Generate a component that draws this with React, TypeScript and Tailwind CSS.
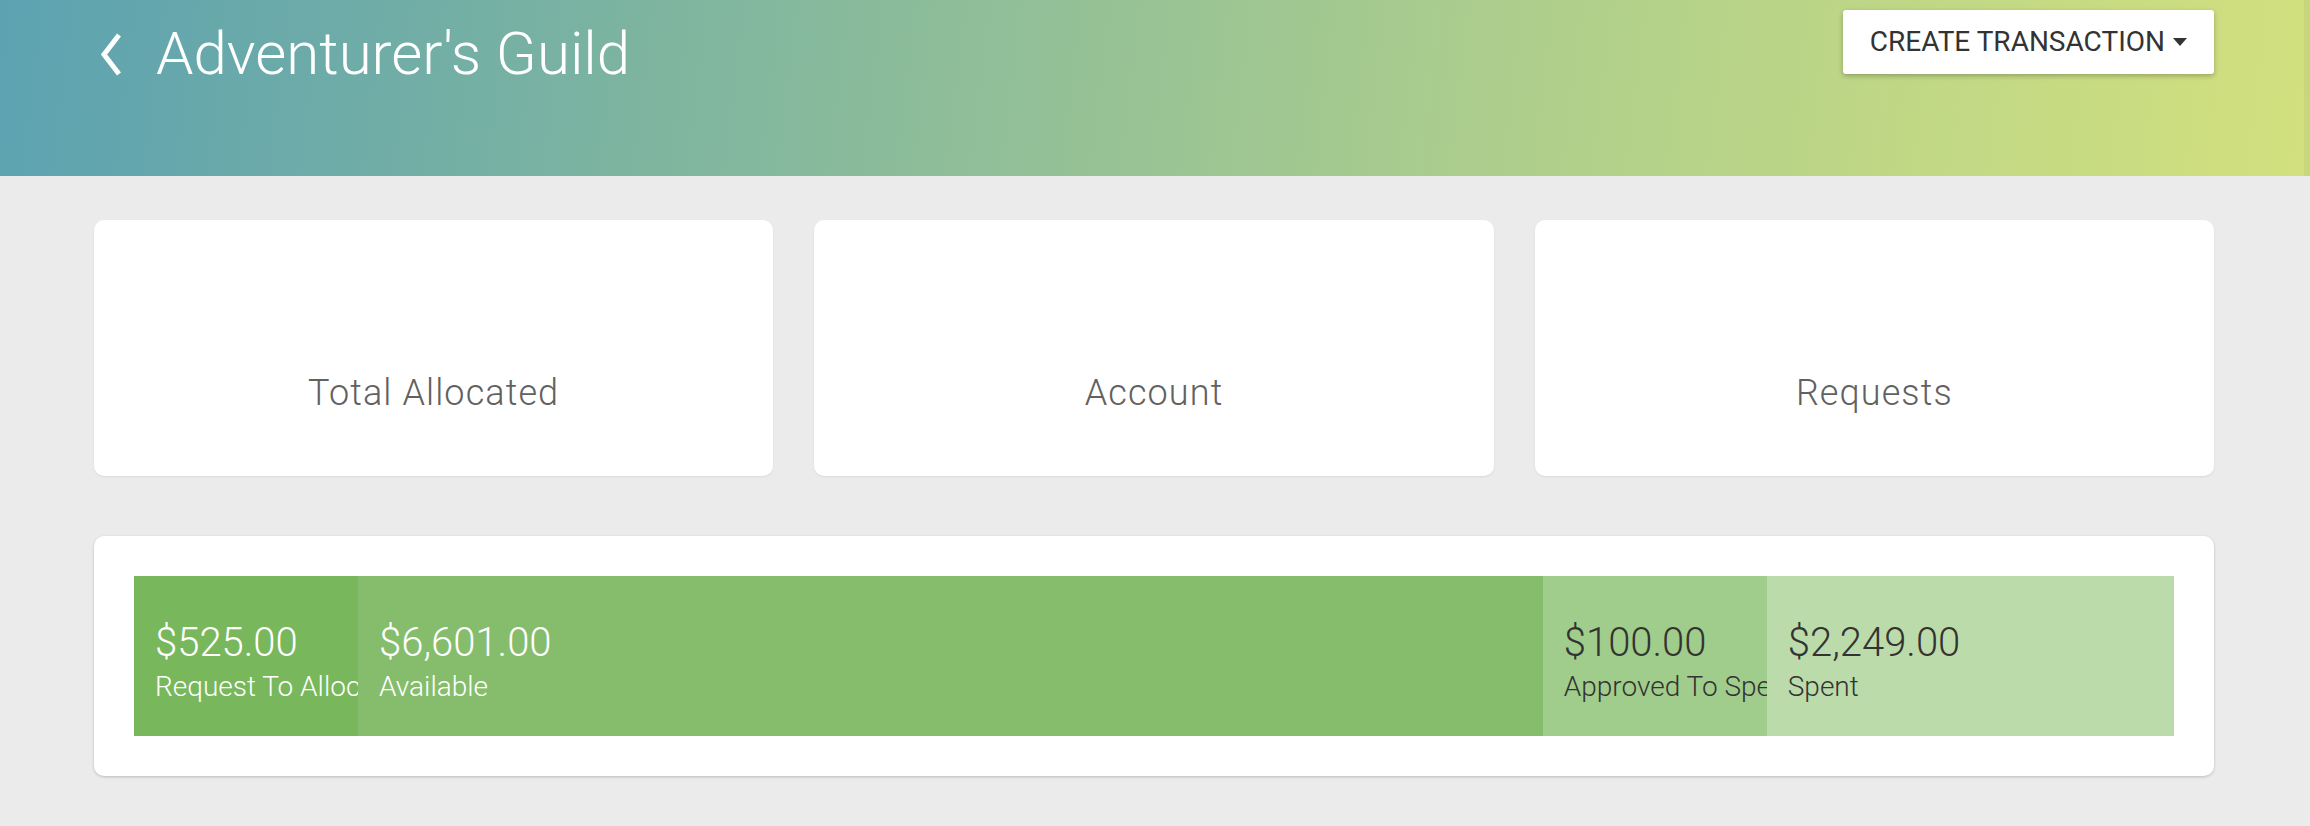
const segments = [
  { amount: "$525.00", label: "Request To Allocate", className: "w-[224px] shrink-0 bg-[#78b75c] text-white" },
  { amount: "$6,601.00", label: "Available", className: "grow-[1163] basis-0 bg-[#85bd6c] text-white" },
  { amount: "$100.00", label: "Approved To Spend", className: "w-[224px] shrink-0 bg-[#a1cd8c] text-[#333333]" },
  { amount: "$2,249.00", label: "Spent", className: "grow-[386] basis-0 bg-[#bbdbab] text-[#333333]" },
];

const cards = ["Total Allocated", "Account", "Requests"];

function BackChevron() {
  return (
    <svg width="22" height="43" viewBox="0 0 22 43" fill="none" aria-hidden>
      <polyline points="19,2 4,21.5 19,41" stroke="white" strokeWidth="5" strokeLinejoin="miter" />
    </svg>
  );
}

export default function App() {
  return (
    <div className="min-h-screen bg-[#ebebeb] font-[Roboto,sans-serif]">
      <header className="flex h-[176px] bg-[linear-gradient(97deg,#5ca2b1_0%,#86b99c_35%,#b3d18a_70%,#d2e07e_100%)]">
        <div className="flex flex-1 items-start justify-between pl-[100px] pr-[90px]">
          <div className="mt-[24px] flex items-center gap-[34px]">
            <button type="button" aria-label="Back" className="flex">
              <BackChevron />
            </button>
            <h1 className="text-[60px] leading-[60px] font-light text-white">Adventurer's Guild</h1>
          </div>
          <button
            type="button"
            className="mt-[10px] flex h-[64px] items-center gap-[8px] rounded-[3px] bg-white px-[27px] text-[28px] text-[#333333] shadow-[0_2px_5px_rgba(0,0,0,0.25)]"
          >
            CREATE TRANSACTION
            <span className="h-0 w-0 border-x-[7.5px] border-t-[8px] border-x-transparent border-t-[#333333]" />
          </button>
        </div>
        <div className="w-[6px] bg-black/[0.04]" />
      </header>

      <main className="pl-[94px] pr-[96px] pt-[44px]">
        <div className="grid grid-cols-3 gap-[41px]">
          {cards.map((label) => (
            <div
              key={label}
              className="flex h-[256px] flex-col items-center justify-end rounded-[10px] bg-white pb-[61px] shadow-[0_1px_2px_rgba(0,0,0,0.08)]"
            >
              <span className="text-[36px] leading-[1.2] font-light tracking-[1.1px] text-[#616161]">{label}</span>
            </div>
          ))}
        </div>

        <div className="mt-[60px] h-[240px] rounded-[10px] bg-white p-[40px] shadow-[0_1px_3px_rgba(0,0,0,0.2)]">
          <div className="flex h-full">
            {segments.map((s) => (
              <div key={s.label} className={`overflow-hidden whitespace-nowrap pl-[21px] pt-[43px] ${s.className}`}>
                <div className="text-[40px] leading-[48px] font-light">{s.amount}</div>
                <div className="text-[28px] leading-[39px] font-light">{s.label}</div>
              </div>
            ))}
          </div>
        </div>
      </main>
    </div>
  );
}
